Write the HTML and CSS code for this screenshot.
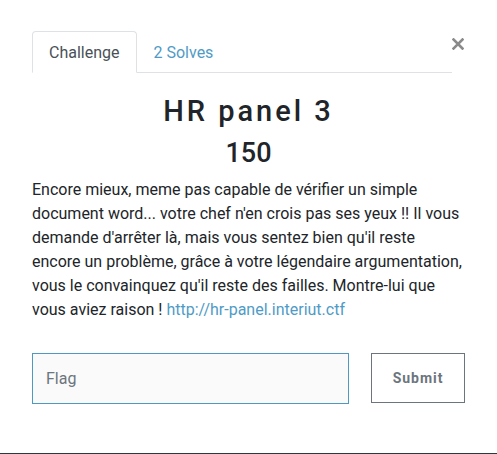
FILE: index.html
```html
<!DOCTYPE html>
<html lang="fr">
<head>
<meta charset="utf-8">
<title>HR panel 3</title>
<link rel="stylesheet" href="styles.css">
</head>
<body>
<div class="modal">
  <div class="modal-body">
    <div class="tab-row">
      <nav class="tabs">
        <a class="tab active">Challenge</a>
        <a class="tab">2 Solves</a>
      </nav>
      <button class="close" aria-label="Close">
        <svg width="12" height="12" viewBox="0 0 12 12"><path d="M1.5 1.5 L10.5 10.5 M10.5 1.5 L1.5 10.5" stroke="#8a8a8a" stroke-width="2.6" stroke-linecap="square"/></svg>
      </button>
    </div>
    <h2 class="title">HR panel 3</h2>
    <h3 class="value">150</h3>
    <p class="desc">Encore mieux, meme pas capable de vérifier un simple document word... votre chef n'en crois pas ses yeux !! Il vous demande d'arrêter là, mais vous sentez bien qu'il reste encore un problème, grâce à votre légendaire argumentation, vous le convainquez qu'il reste des failles. Montre-lui que vous aviez raison ! <a href="#" class="link">http://hr-panel.interiut.ctf</a></p>
    <form class="flag-form">
      <input class="flag-input" type="text" placeholder="Flag">
      <button class="submit" type="button">Submit</button>
    </form>
  </div>
</div>
</body>
</html>
```

FILE: styles.css
```css
html, body {
  margin: 0;
  padding: 0;
}
body {
  background: #243b40;
  font-family: Roboto, "Liberation Sans", sans-serif;
  color: #212529;
}
.modal {
  background: #fff;
  height: 453px;
}
.modal-body {
  padding: 31px 32px 0 32px;
}
.tab-row {
  display: flex;
  align-items: flex-start;
}
.tabs {
  flex: 1;
  display: flex;
  border-bottom: 1px solid #dee2e6;
}
.tab {
  display: block;
  padding: 10px 16px 9px 16px;
  font-size: 16px;
  line-height: 21px;
  color: #4f9bc6;
  border: 1px solid transparent;
  border-top-left-radius: 4px;
  border-top-right-radius: 4px;
  margin-bottom: -1px;
  cursor: pointer;
}
.tab.active {
  color: #495057;
  border-color: #dee2e6 #dee2e6 #fff;
  background: #fff;
}
.close {
  display: block;
  width: 13px;
  height: 12px;
  padding: 0;
  margin: 7px 0 0 0;
  border: 0;
  background: none;
  cursor: pointer;
}
.close svg {
  display: block;
}
.title {
  margin: 21px 0 0 0;
  text-align: center;
  font-size: 29px;
  font-weight: 500;
  line-height: 1.2;
  letter-spacing: 3px;
  color: #212529;
}
.value {
  margin: 8px 0 0 0;
  text-align: center;
  font-size: 27px;
  font-weight: 500;
  line-height: 1.2;
  color: #212529;
}
.desc {
  margin: 9px 0 0 0;
  font-size: 16px;
  line-height: 24px;
  color: #212529;
}
.link {
  color: #4f9bc6;
  text-decoration: none;
}
.flag-form {
  display: flex;
  align-items: flex-start;
  gap: 22px;
  margin-top: 31px;
}
.flag-input {
  box-sizing: border-box;
  width: 318px;
  height: 51px;
  padding: 0 13px;
  border: 1px solid #4f98c2;
  background: #fafafa;
  font-family: Roboto, "Liberation Sans", sans-serif;
  font-size: 16px;
  color: #495057;
  outline: none;
}
.flag-input::placeholder {
  color: #6c757d;
}
.submit {
  box-sizing: border-box;
  width: 94px;
  height: 50px;
  border: 1px solid #6c757d;
  background: #fff;
  font-family: Roboto, "Liberation Sans", sans-serif;
  font-size: 14px;
  font-weight: 700;
  letter-spacing: 1px;
  color: #6c757d;
  cursor: pointer;
}
```
